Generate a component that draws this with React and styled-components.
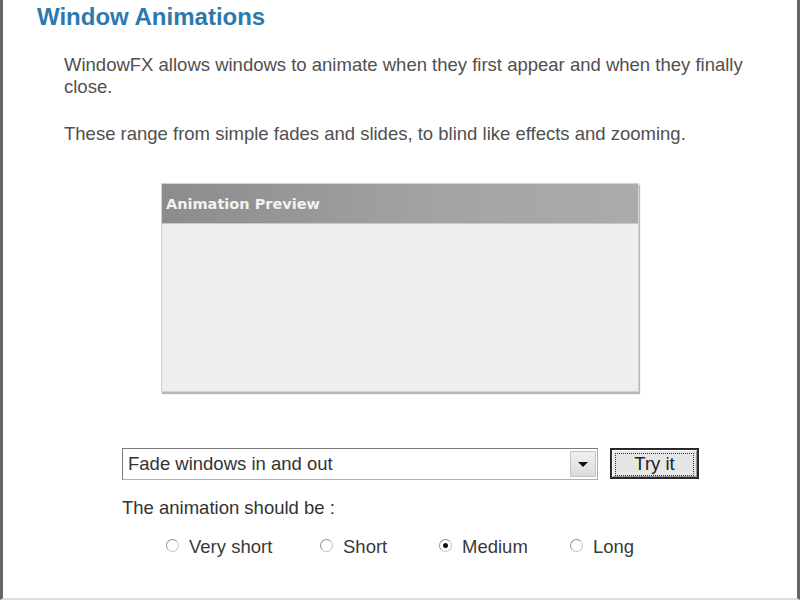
import React from 'react';
import styled, { createGlobalStyle } from 'styled-components';

const GlobalStyle = createGlobalStyle`
  html, body {
    margin: 0;
    padding: 0;
    background: #fff;
  }
  body {
    font-family: 'Liberation Sans', Arial, sans-serif;
  }
`;

const Page = styled.div`
  box-sizing: border-box;
  width: 800px;
  height: 600px;
  border-left: 3px solid #666;
  border-right: 3px solid #666;
  border-bottom: 2px solid #ddd;
  padding: 3px 0 0 34px;
  overflow: hidden;
`;

const Title = styled.h1`
  margin: 0;
  font-size: 24px;
  line-height: 28px;
  font-weight: bold;
  color: #2c79ae;
`;

const Intro = styled.p`
  margin: ${(p) => p.top}px 0 0 27px;
  width: 700px;
  font-size: 18.5px;
  line-height: 22px;
  color: #505050;
`;

const Preview = styled.div`
  box-sizing: border-box;
  width: 478px;
  height: 209px;
  margin: 38px 0 0 124px;
  background: #eeeeee;
  border: 1px solid #d4d4d4;
  box-shadow: 1px 2px 1px #b8b8b8;
`;

const PreviewHeader = styled.div`
  height: 39px;
  display: flex;
  align-items: center;
  padding-left: 4px;
  background: linear-gradient(to right, #8c8c8c, #a4a4a4 60%, #ababab);
  border-bottom: 1px solid #c8c8c8;
  font-family: 'DejaVu Sans', Verdana, sans-serif;
  font-weight: bold;
  font-size: 14.5px;
  color: #f2f2f2;
`;

const Controls = styled.div`
  margin: 56px 0 0 85px;
  display: flex;
  align-items: center;
  gap: 12px;
`;

const Select = styled.div`
  box-sizing: border-box;
  width: 476px;
  height: 32px;
  display: flex;
  align-items: stretch;
  border: 1px solid #b0b0b0;
  border-top-color: #7a7a7a;
  border-left-color: #7a7a7a;
  background: #fff;
`;

const SelectText = styled.span`
  flex: 1;
  display: flex;
  align-items: center;
  padding-left: 5px;
  font-size: 18.5px;
  color: #333;
`;

const SelectArrow = styled.span`
  width: 24px;
  margin: 2px 1px 2px 0;
  display: flex;
  align-items: center;
  justify-content: center;
  background: linear-gradient(#f0f0f0, #dcdcdc);
  border: 1px solid #c4c4c4;
  &::after {
    content: '';
    border-left: 5px solid transparent;
    border-right: 5px solid transparent;
    border-top: 5px solid #111;
  }
`;

const Button = styled.button`
  box-sizing: border-box;
  width: 89px;
  height: 31px;
  margin-top: -2px;
  padding: 3px;
  background: #e6e6e6;
  border: 2px solid #2a2a2a;
  box-shadow: inset 1px 1px 0 #fff, inset -1px -1px 0 #9a9a9a;
  font-family: 'Liberation Sans', Arial, sans-serif;
  font-size: 18.5px;
  color: #222;
`;

const FocusRing = styled.span`
  display: flex;
  align-items: center;
  justify-content: center;
  height: 100%;
  border: 1px dotted #333;
  line-height: 1;
`;

const Label = styled.div`
  margin: 17px 0 0 85px;
  font-size: 18.5px;
  line-height: 22px;
  color: #333;
`;

const RadioRow = styled.div`
  margin: 17px 0 0 129px;
  display: grid;
  grid-template-columns: 154px 119px 131px auto;
  align-items: center;
`;

const RadioItem = styled.label`
  display: flex;
  align-items: center;
  gap: 10px;
  font-size: 18.5px;
  line-height: 22px;
  color: #3a3a3a;
`;

const RadioDot = styled.span`
  box-sizing: border-box;
  width: 13px;
  height: 13px;
  border-radius: 50%;
  border: 1px solid #c4c4c4;
  border-top-color: #929292;
  border-left-color: #929292;
  background: #fff;
  display: flex;
  align-items: center;
  justify-content: center;
  margin-top: -3px;
  &::after {
    content: '';
    width: 5px;
    height: 5px;
    border-radius: 50%;
    background: ${(p) => (p.checked ? '#111' : 'transparent')};
  }
`;

const durations = [
  { label: 'Very short', checked: false },
  { label: 'Short', checked: false },
  { label: 'Medium', checked: true },
  { label: 'Long', checked: false },
];

export default function App() {
  return (
    <>
      <GlobalStyle />
      <Page>
        <Title>Window Animations</Title>
        <Intro top={23}>
          WindowFX allows windows to animate when they first appear and when they finally close.
        </Intro>
        <Intro top={25}>
          These range from simple fades and slides, to blind like effects and zooming.
        </Intro>
        <Preview>
          <PreviewHeader>Animation Preview</PreviewHeader>
        </Preview>
        <Controls>
          <Select>
            <SelectText>Fade windows in and out</SelectText>
            <SelectArrow />
          </Select>
          <Button>
            <FocusRing>Try it</FocusRing>
          </Button>
        </Controls>
        <Label>The animation should be :</Label>
        <RadioRow>
          {durations.map((d) => (
            <RadioItem key={d.label}>
              <RadioDot checked={d.checked} />
              {d.label}
            </RadioItem>
          ))}
        </RadioRow>
      </Page>
    </>
  );
}
